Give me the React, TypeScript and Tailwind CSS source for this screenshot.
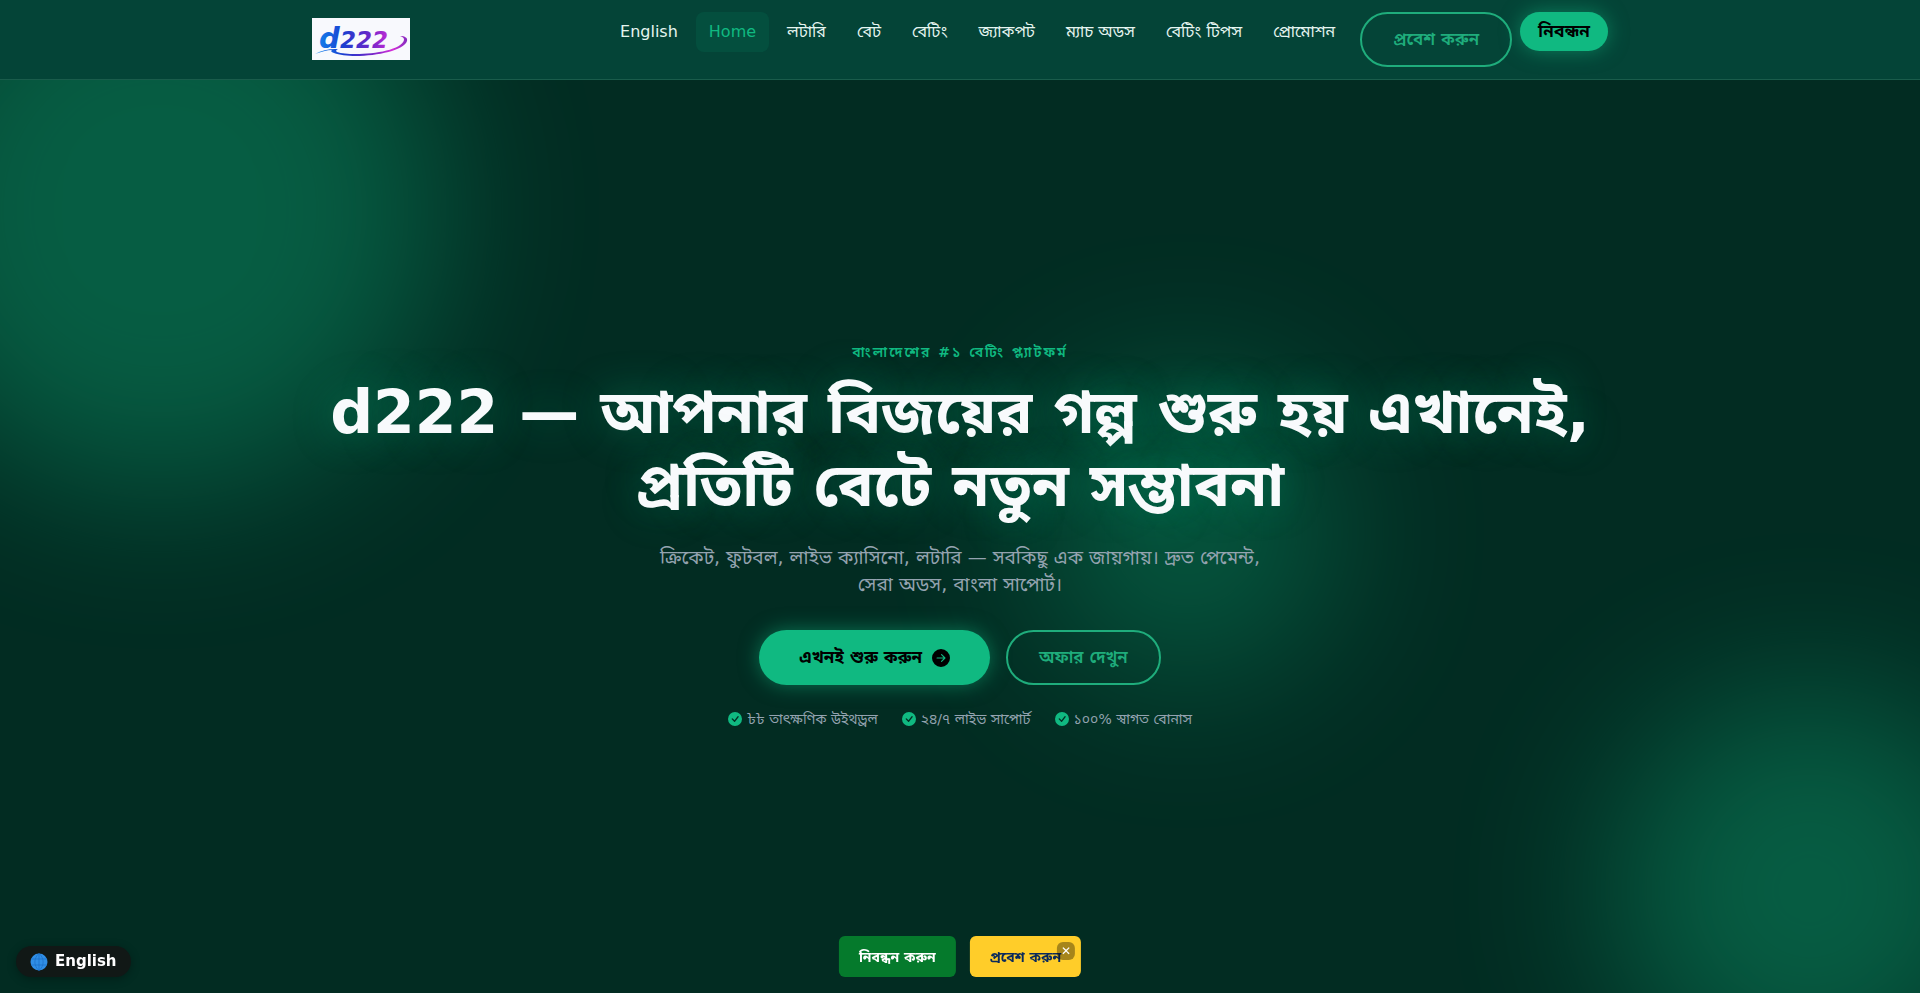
import { clsx } from "clsx";
import { BsArrowRightCircleFill, BsCheckCircleFill } from "react-icons/bs";

const navLinks = [
  { label: "English" },
  { label: "Home", active: true },
  { label: "লটারি" },
  { label: "বেট" },
  { label: "বেটিং" },
  { label: "জ্যাকপট" },
  { label: "ম্যাচ অডস" },
  { label: "বেটিং টিপস" },
  { label: "প্রোমোশন" },
];

const perks = ["৳৳ তাৎক্ষণিক উইথড্রল", "২৪/৭ লাইভ সাপোর্ট", "১০০% স্বাগত বোনাস"];

function Logo() {
  return (
    <svg viewBox="0 0 98 42" className="block h-[42px] w-[98px]" role="img" aria-label="d222">
      <defs>
        <linearGradient id="logo" x1="4" y1="0" x2="94" y2="0" gradientUnits="userSpaceOnUse">
          <stop offset="0" stopColor="#1287ee" />
          <stop offset="0.3" stopColor="#1a3fd0" />
          <stop offset="0.6" stopColor="#6a25c8" />
          <stop offset="0.85" stopColor="#d42fd8" />
          <stop offset="1" stopColor="#8a2cc0" />
        </linearGradient>
      </defs>
      <rect width="98" height="42" fill="#f8f9fd" />
      <text
        x="7"
        y="30"
        fill="url(#logo)"
        className="font-['DejaVu_Sans',sans-serif] text-[29px] font-bold italic"
      >
        d
      </text>
      <text
        x="28"
        y="30"
        fill="url(#logo)"
        className="font-['DejaVu_Sans',sans-serif] text-[23px] font-bold italic"
      >
        222
      </text>
      <path
        d="M3 36C10 32 18 30.500 26 31c-2 1-2.500 2-1 3 15 5 64 1 67-12 .3-2-1-3-4-4 5 0 8 2 7 5-4 13-55 19-73 12-3-1-3.500-2-2-3-5 0-11 2-17 4Z"
        fill="url(#logo)"
      />
    </svg>
  );
}

function Header() {
  return (
    <header className="relative z-10 border-b border-[#1a5c4b] bg-[#044437]">
      <div className="mx-auto flex max-w-[1320px] items-start justify-between px-3 pt-3 pb-3">
        <a href="#" className="pt-1.5">
          <Logo />
        </a>
        <nav className="flex items-start">
          <ul className="mr-3 flex gap-[5px] font-['DejaVu_Sans','Noto_Sans_Bengali_UI',sans-serif]">
            {navLinks.map(({ label, active }) => (
              <li key={label}>
                <a
                  href="#"
                  className={clsx(
                    "block rounded-lg px-[13px] py-2 leading-6",
                    active ? "bg-[#044f3e] text-[#10b981]" : "text-[#e6f5f0]"
                  )}
                >
                  {label}
                </a>
              </li>
            ))}
          </ul>
          <button className="h-[55px] rounded-full border-2 border-[#1fad7c] px-[31px] text-[17px] font-semibold text-[#1fad7c]">
            প্রবেশ করুন
          </button>
          <button className="ml-2 h-[39px] rounded-full bg-[#10b981] px-[18px] font-['DejaVu_Sans','Noto_Sans_Bengali_UI',sans-serif] text-[17px] font-bold text-black shadow-[0_0_20px_rgba(16,185,129,0.5)]">
            নিবন্ধন
          </button>
        </nav>
      </div>
    </header>
  );
}

function Hero() {
  return (
    <section className="relative flex flex-1 items-center justify-center overflow-hidden px-3 pb-1">
      {/* Glowing orbs */}
      <div className="absolute -top-[150px] -left-[120px] size-[560px] rounded-full bg-[#10b981] opacity-35 blur-[80px]" />
      <div className="absolute -right-[90px] -bottom-[97px] size-[400px] rounded-full bg-[#10b981] opacity-35 blur-[80px]" />
      <div className="absolute top-[33%] left-[54%] size-[300px] rounded-full bg-[#10b981] opacity-30 blur-[80px]" />

      <div className="relative max-w-[1296px] text-center">
        <p className="mb-3 text-sm leading-6 font-semibold tracking-[2px] text-[#10b981]">
          বাংলাদেশের #১ বেটিং প্ল্যাটফর্ম
        </p>
        <h1 className="mb-[22px] text-[60px] leading-[73px] font-bold text-[#f8fafc] [text-shadow:0_0_40px_rgba(16,185,129,0.4)]">
          d222 — আপনার বিজয়ের গল্প শুরু হয় এখানেই, প্রতিটি বেটে নতুন সম্ভাবনা
        </h1>
        <p className="mx-auto mb-8 max-w-[600px] text-[19px] leading-[27px] text-[#94a3b0]">
          ক্রিকেট, ফুটবল, লাইভ ক্যাসিনো, লটারি — সবকিছু এক জায়গায়। দ্রুত পেমেন্ট, সেরা অডস, বাংলা সাপোর্ট।
        </p>
        <div className="flex justify-center gap-4">
          <button className="flex h-[55px] items-center gap-2.5 rounded-full bg-[#10b981] px-10 text-[17px] font-bold text-black shadow-[0_0_20px_rgba(16,185,129,0.5)]">
            এখনই শুরু করুন
            <BsArrowRightCircleFill size={18} />
          </button>
          <button className="h-[55px] rounded-full border-2 border-[#1fad7c] px-[31px] text-[17px] font-semibold text-[#1fad7c]">
            অফার দেখুন
          </button>
        </div>
        <ul className="mt-6 flex justify-center gap-6 font-['DejaVu_Sans','Noto_Sans_Bengali_UI',sans-serif] text-sm leading-5 text-[#94a3b0]">
          {perks.map((perk) => (
            <li key={perk} className="flex items-center gap-[5px]">
              <BsCheckCircleFill size={14} className="text-[#10b981]" />
              {perk}
            </li>
          ))}
        </ul>
      </div>
    </section>
  );
}

function StickyActions() {
  return (
    <div className="fixed bottom-4 left-1/2 z-20 flex -translate-x-1/2 gap-3.5">
      <button className="h-[41px] rounded-md bg-[#057a2c] px-5 text-sm font-bold text-white">
        নিবন্ধন করুন
      </button>
      <div className="relative">
        <button className="h-[41px] rounded-md bg-[#ffcd29] px-5 text-sm font-bold text-[#0a2a5c]">
          প্রবেশ করুন
        </button>
        <button
          aria-label="Close"
          className="absolute top-1.5 right-1.5 flex size-[18px] items-center justify-center rounded-md bg-black/35 text-xs text-white"
        >
          ✕
        </button>
      </div>
    </div>
  );
}

function LanguageButton() {
  return (
    <button className="fixed bottom-4 left-4 z-20 flex h-[31px] items-center gap-[7px] rounded-full bg-[#111816] px-3.5 text-[15px] font-semibold text-white shadow-[0_2px_10px_rgba(0,0,0,0.3)]">
      <svg viewBox="0 0 18 18" className="size-[18px]" aria-hidden="true">
        <circle cx="9" cy="9" r="8.500" fill="#2f8ee6" />
        <path
          d="M1 6h16M1 12h16M9 .5v17M9 .5C3.500 5 3.500 13 9 17.500M9 .5c5.500 4.500 5.500 12.500 0 17"
          fill="none"
          stroke="#1b6fc4"
          strokeWidth="0.7"
        />
      </svg>
      English
    </button>
  );
}

export default function App() {
  return (
    <div
      lang="bn"
      className="flex min-h-screen flex-col bg-[#022c22] font-['DejaVu_Sans','Noto_Sans_Bengali',sans-serif]"
    >
      <Header />
      <Hero />
      <StickyActions />
      <LanguageButton />
    </div>
  );
}
